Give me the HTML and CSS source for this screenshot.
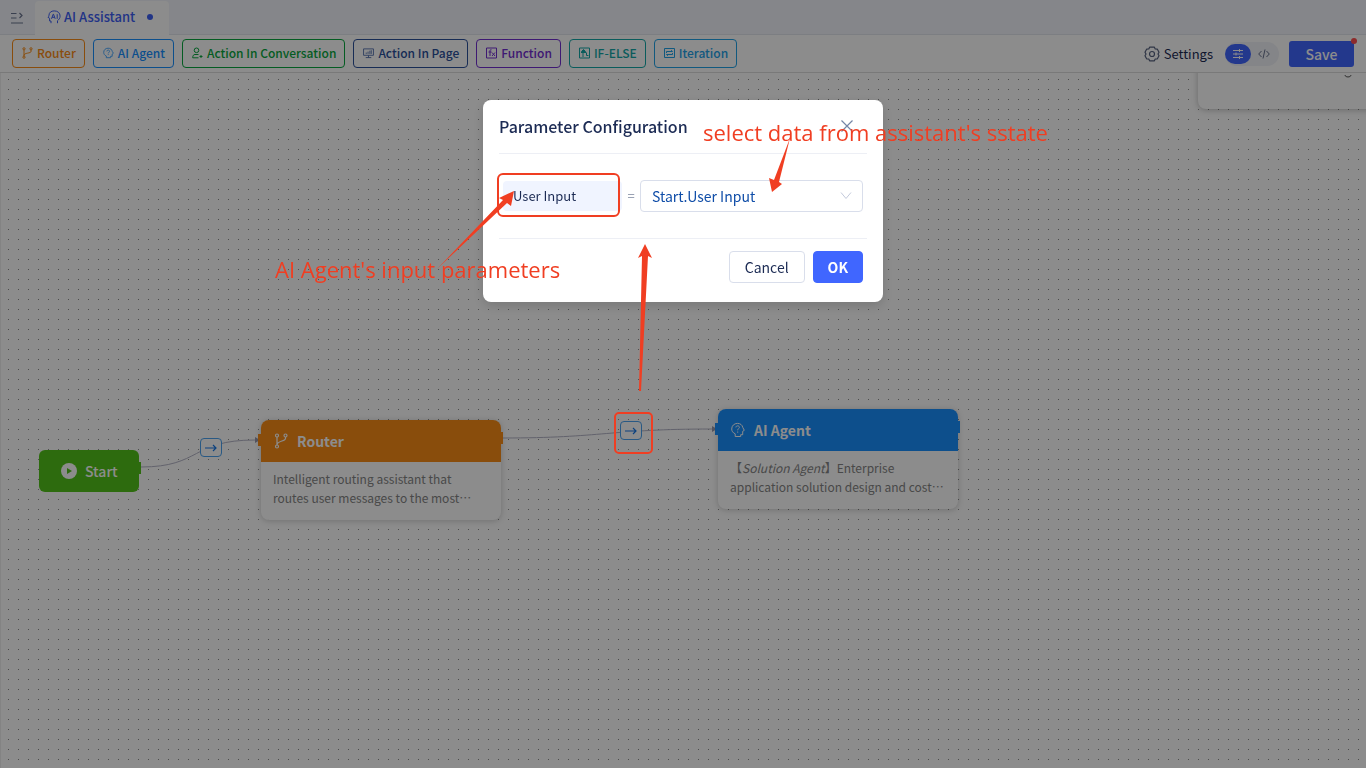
FILE: index.html
```html
<!DOCTYPE html>
<html lang="en">
<head>
<meta charset="utf-8">
<title>AI Assistant</title>
<link rel="stylesheet" href="styles.css">
</head>
<body>
<div class="app">
  <header class="tabbar">
    <button class="icon-btn" aria-label="Expand menu">
      <svg width="12" height="12" viewBox="0 0 12 12" fill="none" stroke="currentColor" stroke-width="1.200"><path d="M0 1.500h5.500M0 6h5.500M0 11h12M8.500 1l2.500 2.500-2.500 2.500"/></svg>
    </button>
    <a class="tab" href="#assistant">
      <svg width="14" height="14" viewBox="0 0 14 14" fill="none" stroke="currentColor"><path d="M4 13.200V11H2.600V8.300L1 7.300C1.500 6.800 2 6.200 2 5.200 2 2.600 4.200.9 7.200.9c3.500 0 5.900 2 5.900 5.200 0 2.200-1.300 3.600-2.600 4.600v2.500M4.500 8.800l1.700-4.600h.3l1.700 4.600M5.100 7.300h2.500M10.200 4.200v4.600"/></svg>
      <span>AI Assistant</span>
      <i class="dirty"></i>
    </a>
  </header>

  <div class="toolbar">
    <div class="tools">
      <button class="tool router">
        <svg width="11" height="12" viewBox="0 0 11 12" fill="none" stroke="currentColor"><circle cx="2" cy="1.800" r="1.100"/><circle cx="9" cy="1.800" r="1.100"/><circle cx="2" cy="10.200" r="1.100"/><path d="M2 3v6M9 3v1.500C9 6.500 2 5.500 2 8.500"/></svg>
        Router</button>
      <button class="tool agent">
        <svg width="11" height="12" viewBox="0 0 14 14" fill="none" stroke="currentColor" stroke-width="1.200"><path d="M4.200 13H9.700V11.200H11.700V8.300L13.200 7.300 11.800 5C11.300 2.500 9.400.9 6.500.9 3.200.9.9 3.200.9 6.200c0 2 1.100 3.600 3.300 4.600zM4.900 4.900C5 2.700 8.600 2.900 8.400 5 8.300 6.100 6.700 6.100 6.700 7.500M6.700 8.600v1"/></svg>
        AI Agent</button>
      <button class="tool conversation">
        <svg width="11" height="12" viewBox="0 0 11 12" fill="none" stroke="currentColor"><circle cx="4.500" cy="3.300" r="2.300"/><path d="M3 7.500h3.500M6.500 10.800H.7C.7 8.500 1.600 7.500 3 7.500M9 8v3M7.500 9.500h3"/></svg>
        Action In Conversation</button>
      <button class="tool page">
        <svg width="11" height="12" viewBox="0 0 12 12" fill="none" stroke="currentColor"><path d="M.6 1.500h10.800v7H.6zM3 11h6M6 8.500V11M3.500 7V5.500M5.500 7V4.500M7.500 7V3.500M9 7V3"/></svg>
        Action In Page</button>
      <button class="tool function">
        <svg width="11" height="12" viewBox="0 0 11 12" fill="none" stroke="currentColor"><path d="M.5 1h10v10H.5zM5.500 2.800C4.300 2.500 4 3 4 4v5M2.500 5h3M6 5.500l3 3.500M9 5.500L6 9"/></svg>
        Function</button>
      <button class="tool ifelse">
        <svg width="11" height="12" viewBox="0 0 11 12" fill="none" stroke="currentColor"><path d="M.5 1h10v10H.5z"/><path d="M4 10V4M2 5.500h5M7.500 5.500v3h2"/><path d="M2.500 4.500L4.500 2.500 6.500 4.500z" fill="currentColor"/></svg>
        IF-ELSE</button>
      <button class="tool iteration">
        <svg width="11" height="12" viewBox="0 0 11 12" fill="none" stroke="currentColor"><path d="M.5 1.500h10v9H.5zM2.500 6V4.500h6L7.200 3.200M8.500 6v1.500h-6l1.300 1.300"/></svg>
        Iteration</button>
    </div>
    <div class="actions">
      <button class="settings">
        <svg width="16" height="16" viewBox="0 0 16 16" fill="none" stroke="currentColor" stroke-width="1.200"><path d="M5.600 1.200h4.800l.8 1.800 2.200.2 1.600 3-1 1.800 1 1.800-1.600 3-2.200.2-.8 1.800H5.600L4.800 13l-2.200-.2-1.600-3L2 8 1 6.200l1.600-3L4.800 3z" stroke-linejoin="round"/><circle cx="8" cy="8" r="2.500"/></svg>
        Settings</button>
      <div class="switch">
        <button class="mode on" aria-label="Visual mode"><svg width="10" height="10" viewBox="0 0 10 10" fill="none" stroke="currentColor"><path d="M0 1.500h10M0 5h10M0 8.500h10M6.500 0v3M3 3.500v3M6.500 7v3"/></svg></button>
        <button class="mode" aria-label="Code mode"><svg width="12" height="10" viewBox="0 0 12 10" fill="none" stroke="currentColor"><path d="M3.500 2L.7 5l2.800 3M8.500 2l2.800 3-2.800 3M7 .5l-2 9"/></svg></button>
      </div>
      <button class="save">Save<i class="alert"></i></button>
    </div>
  </div>

  <main class="canvas">
    <svg class="wires" width="100%" height="100%">
      <defs><pattern id="dots" x="0" y="0" width="10" height="10" patternUnits="userSpaceOnUse"><rect x="8" y="6" width="1" height="1" fill="#8c8c8c"/></pattern></defs>
      <rect width="100%" height="100%" fill="url(#dots)"/>
      <g fill="none" stroke="#b4b4c6">
        <path d="M141 394C201 394 191 367 255 367"/>
        <path d="M503 365C603 365 610 356 712 356"/>
      </g>
      <path d="M255 364l5 3-5 3zM712 353l5 3-5 3z" fill="#9a9aae"/>
    </svg>
    <div class="panel"><svg width="8" height="4" viewBox="0 0 8 4" fill="none" stroke="#555"><path d="M1 0C1 2.600 7 2.600 7 0"/></svg></div>
    <button class="chip chip-a" aria-label="Start to Router parameters"><svg width="12" height="8" viewBox="0 0 12 8" fill="none" stroke="currentColor" stroke-width="1.200"><path d="M0 4h11M8 1l3 3-3 3"/></svg></button>
    <button class="chip chip-b" aria-label="Router to AI Agent parameters"><svg width="12" height="8" viewBox="0 0 12 8" fill="none" stroke="currentColor" stroke-width="1.200"><path d="M0 4h11M8 1l3 3-3 3"/></svg></button>

    <div class="start">
      <svg width="16" height="16" viewBox="0 0 16 16"><circle cx="8" cy="8" r="8" fill="#fff"/><path d="M6 5l5 3-5 3z" fill="#52c41a"/></svg>
      Start<i class="port out"></i>
    </div>
    <article class="node node-router">
      <h3><svg width="14" height="16" viewBox="0 0 14 16" fill="none" stroke="currentColor" stroke-width="1.200"><circle cx="3" cy="2.500" r="1.500"/><circle cx="11.500" cy="2.500" r="1.500"/><circle cx="3" cy="13.500" r="1.500"/><path d="M3 4v8M11.500 4v1.500C11.500 8.500 3 7.500 3 12"/></svg>Router</h3>
      <p lang="zh-CN">Intelligent routing assistant that routes user messages to the most…</p>
      <i class="port in"></i><i class="port out"></i>
    </article>
    <article class="node node-agent">
      <h3><svg width="14" height="16" viewBox="0 0 14 15" fill="none" stroke="currentColor"><path d="M4.200 14H9.700V12.200H11.700V8.800L13.300 7.800 11.800 5C11.300 2.500 9.400.9 6.500.9 3.200.9.700 3.200.7 6.500c0 2 1.100 3.800 3.500 4.800zM4.900 4.900C5 2.700 8.600 2.900 8.400 5 8.300 6.100 6.700 6.100 6.700 7.800M6.700 9v1.200"/></svg>AI Agent</h3>
      <p lang="zh-CN">【<em>Solution Agent</em>】Enterprise application solution design and cost…</p>
      <i class="port in"></i><i class="port out"></i>
    </article>
  </main>
</div>

<div class="overlay">
  <form class="dialog" role="dialog" aria-labelledby="dialog-title">
    <div class="dialog-head">
      <h2 id="dialog-title">Parameter Configuration</h2>
      <button type="button" class="close" aria-label="Close"><svg width="12" height="12" viewBox="0 0 12 12" fill="none" stroke="currentColor" stroke-width="1.200"><path d="M.5.500l11 11M11.500.500l-11 11"/></svg></button>
    </div>
    <div class="dialog-body">
      <label class="param" for="source">User Input</label>
      <span class="equals">=</span>
      <span class="select">
        <select id="source"><option>Start.User Input</option></select>
        <svg width="12" height="8" viewBox="0 0 12 8" fill="none" stroke="currentColor"><path d="M1 .5l5 6 5-6"/></svg>
      </span>
    </div>
    <div class="dialog-foot">
      <button type="button" class="btn">Cancel</button>
      <button type="button" class="btn primary">OK</button>
    </div>
  </form>
</div>

<svg class="notes" width="100%" height="100%">
  <g fill="none" stroke="#f03e22" stroke-width="2">
    <rect x="498" y="174" width="121" height="42" rx="5"/>
    <rect x="615" y="413" width="37" height="40" rx="4"/>
  </g>
  <g fill="#f03e22">
    <path d="M790 138L774 180 769 178 772 192 782 184 779 182z"/>
    <path d="M437 269L503 200 499 198 514 191 511 206 507 203z"/>
    <path d="M639 391L642 256 638 258 645 244 652 258 648 256 641 391z"/>
    <text x="703" y="141">select data from assistant's sstate</text>
    <text x="275" y="278">AI Agent's input parameters</text>
  </g>
</svg>
</body>
</html>
```

FILE: styles.css
```css
* { box-sizing: border-box; }

body {
  margin: 0;
  overflow: hidden;
  font: 14px/20px "Noto Sans CJK SC", "Noto Sans", sans-serif;
  color: #1c2b54;
  background: #fff;
}

button, select { font: inherit; color: inherit; background: none; border: 0; padding: 0; margin: 0; }
svg { flex: none; }

.app { display: flex; flex-direction: column; height: 100vh; }

.tabbar { display: flex; height: 35px; padding-top: 1px; background: #f2f4fb; border-bottom: 1px solid #e2e5ed; }
.icon-btn { width: 35px; padding-right: 2px; color: #6b7590; display: flex; align-items: center; justify-content: center; }
.tab {
  display: flex; align-items: center; gap: 3px;
  height: 34px; padding: 0 16px 2px 12px;
  background: #fff; border-radius: 4px 4px 0 0;
  color: #3d60f5; font-size: 13px; font-weight: 500; text-decoration: none;
}
.dirty { width: 6px; height: 6px; margin-left: 9px; border-radius: 50%; background: #3d60f5; }

.toolbar {
  display: flex; align-items: center; justify-content: space-between;
  height: 38px; padding: 0 12px; background: #fff; border-bottom: 1px solid #ddd;
}
.tools { display: flex; gap: 8px; }
.tool {
  display: flex; align-items: center; gap: 4px;
  height: 29px; padding: 0 8px 1px 9px;
  border: 1px solid; border-radius: 4px;
  font-size: 12px; font-weight: 500; white-space: nowrap;
}
.router { color: #fa8c16; }
.agent { color: #1890ff; }
.conversation { color: #08a83e; }
.page { color: #2b509b; }
.function { color: #722ed1; }
.ifelse { color: #13a8a8; }
.iteration { color: #1fa2e8; }
.tool.page svg, .tool.agent svg { opacity: .8; }

.actions { display: flex; align-items: center; }
.settings { display: flex; align-items: center; gap: 4px; margin-right: 12px; font-size: 13px; }
.settings svg { color: #56617f; }
.switch { display: flex; width: 54px; height: 24px; padding: 2px 0; margin-right: 10px; border-radius: 12px; background: #f0f2f8; }
.mode { display: flex; align-items: center; justify-content: center; width: 26px; height: 20px; border-radius: 10px; color: #66708c; }
.mode.on { color: #fff; background: #4066ff; }
.save { position: relative; width: 65px; height: 26px; border-radius: 3px; background: #4066ff; color: #fff; font-weight: 500; }
.alert { position: absolute; top: -3px; right: -3px; width: 6px; height: 6px; border-radius: 50%; background: #ff4d4f; }

.canvas { position: relative; flex: 1; overflow: hidden; border-left: 1px solid #eee; }
.wires { position: absolute; inset: 0 0 0 -1px; }

.panel { position: absolute; top: -80px; left: 1197px; width: 240px; height: 116px; padding: 80px 0 0 146px; line-height: 0; border-radius: 8px; background: #fff; box-shadow: 0 1px 6px rgba(0, 0, 0, .25); }

.chip { position: absolute; width: 22px; height: 19px; display: flex; align-items: center; justify-content: center; border: 1px solid #4ba3f0; border-radius: 4px; background: #fff; color: #1778e8; }
.chip-a { left: 199px; top: 365px; }
.chip-b { left: 619px; top: 348px; }

.start {
  position: absolute; left: 38px; top: 377px; width: 100px; height: 42px;
  display: flex; align-items: center; gap: 8px; padding-left: 22px;
  border-radius: 6px; background: #52c41a; color: #fff; font-weight: 500;
  --accent: #52c41a;
}
.node { position: absolute; width: 240px; border-radius: 8px; background: #fff; box-shadow: 0 1px 6px rgba(0, 0, 0, .2); }
.node-router { left: 260px; top: 347px; --accent: #fa8c16; }
.node-agent { left: 717px; top: 336px; --accent: #1890ff; }
.node h3 { display: flex; align-items: center; gap: 9px; height: 42px; margin: 0; padding: 0 13px; border-radius: 8px 8px 0 0; background: var(--accent); color: #fff; font-size: 14px; font-weight: 700; }
.node p { margin: 0; padding: 7px 12px 13px; color: #858585; font-size: 12px; line-height: 19px; }
.port { position: absolute; width: 3px; height: 12px; background: var(--accent); }
.port.in { left: -3px; top: 14px; }
.port.out { right: -2px; top: 12px; }

.overlay { position: fixed; inset: 0; display: flex; align-items: flex-start; justify-content: center; padding-top: 100px; background: rgba(0, 0, 0, .45); }
.dialog { width: 400px; padding: 0 16px; border-radius: 8px; background: #fff; box-shadow: 0 4px 12px rgba(0, 0, 0, .15); }
.dialog-head { display: flex; align-items: center; justify-content: space-between; height: 54px; padding: 0 14px 1px 0; border-bottom: 1px solid #edeff5; }
.dialog-head h2 { margin: 0; font-size: 16px; font-weight: 500; }
.close { display: flex; color: #7486a6; }
.dialog-body { display: flex; align-items: center; height: 84px; padding: 0 4px; }
.param { flex: 1; height: 30px; padding: 0 10px; border-radius: 4px; background: #f0f4ff; line-height: 30px; font-size: 13px; }
.equals { width: 18px; text-align: center; color: #7d879f; font-size: 13px; }
.select { position: relative; width: 223px; color: #c3cadb; }
.select select { display: block; width: 100%; height: 32px; padding: 0 11px; appearance: none; border: 1px solid #d9deeb; border-radius: 4px; background: #fff; color: #0f4da8; font-size: 14px; }
.select svg { position: absolute; right: 11px; top: 12px; }
.dialog-foot { display: flex; justify-content: flex-end; gap: 8px; padding: 12px 4px 19px; border-top: 1px solid #edeff5; }
.btn { height: 32px; padding: 0 15px; border: 1px solid #d9deeb; border-radius: 4px; background: #fff; }
.primary { padding: 0 14px; border-color: #4066ff; background: #4066ff; color: #fff; font-weight: 700; }

.notes { position: fixed; inset: 0; pointer-events: none; font: 22px "Open Sans", sans-serif; }
```
